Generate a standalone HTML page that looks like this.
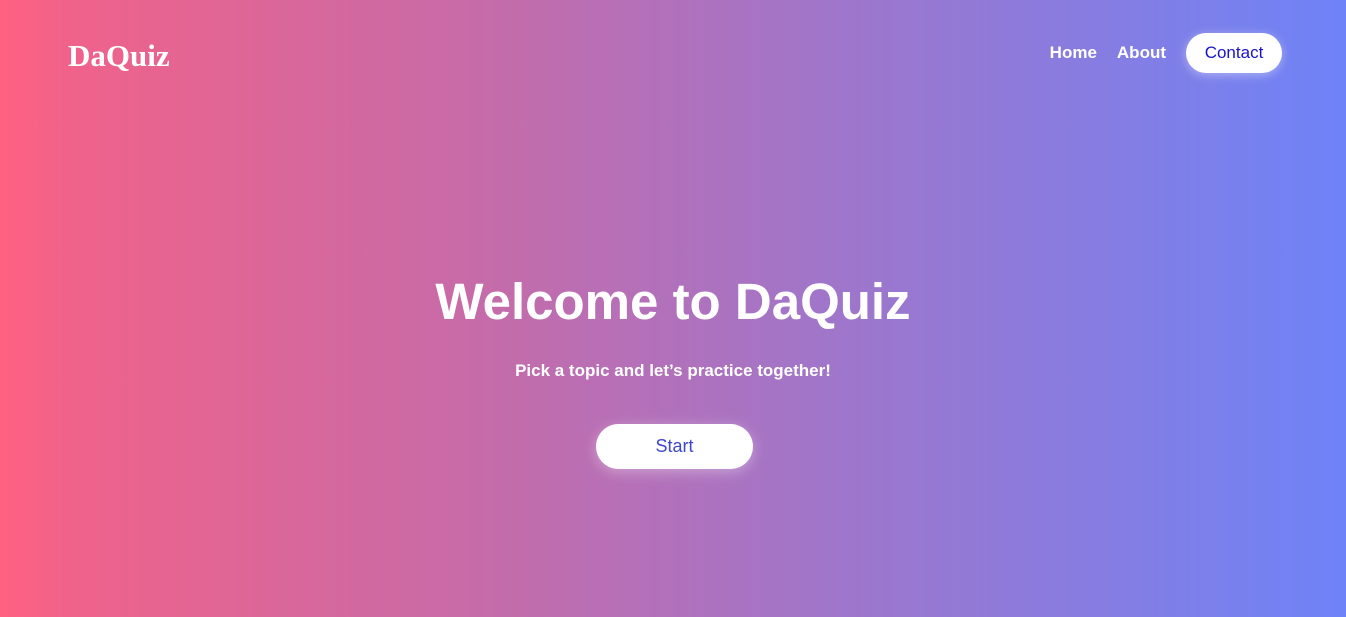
<!DOCTYPE html>
<html><head><style>
html,body{margin:0;padding:0;}
body{width:1346px;height:617px;overflow:hidden;background:linear-gradient(90deg,#ff6181 0%,#f0628a 5%,#c76ba8 35%,#a275c8 60%,#6e83f7 100%);font-family:"Liberation Sans",sans-serif;color:#fff;position:relative;}
.logo{position:absolute;left:68px;top:38px;font-family:"Liberation Serif",serif;font-weight:bold;font-size:31px;}
.nav{position:absolute;top:33px;right:64px;display:flex;align-items:center;}
.nav a{color:#fff;font-size:17px;font-weight:bold;margin-right:20px;text-decoration:none;}
.nav .c{background:#fff;color:#1a12c8;font-weight:normal;border-radius:22px;width:96px;height:40px;display:flex;align-items:center;justify-content:center;margin:0;box-shadow:0 2px 10px rgba(255,255,255,.4);}
h1{position:absolute;top:272px;left:0;width:1346px;text-align:center;margin:0;font-size:51px;font-weight:bold;}
p{position:absolute;top:361px;left:0;width:1346px;text-align:center;margin:0;font-size:17px;font-weight:bold;}
.start{position:absolute;left:596px;top:424px;width:157px;height:45px;background:#fff;border-radius:23px;color:#3d47c9;font-size:18px;display:flex;align-items:center;justify-content:center;box-shadow:0 3px 14px rgba(255,255,255,.35);}
</style></head><body>
<div class="logo">DaQuiz</div>
<div class="nav"><a>Home</a><a>About</a><a class="c">Contact</a></div>
<h1>Welcome to DaQuiz</h1>
<p>Pick a topic and let’s practice together!</p>
<div class="start">Start</div>
</body></html>
